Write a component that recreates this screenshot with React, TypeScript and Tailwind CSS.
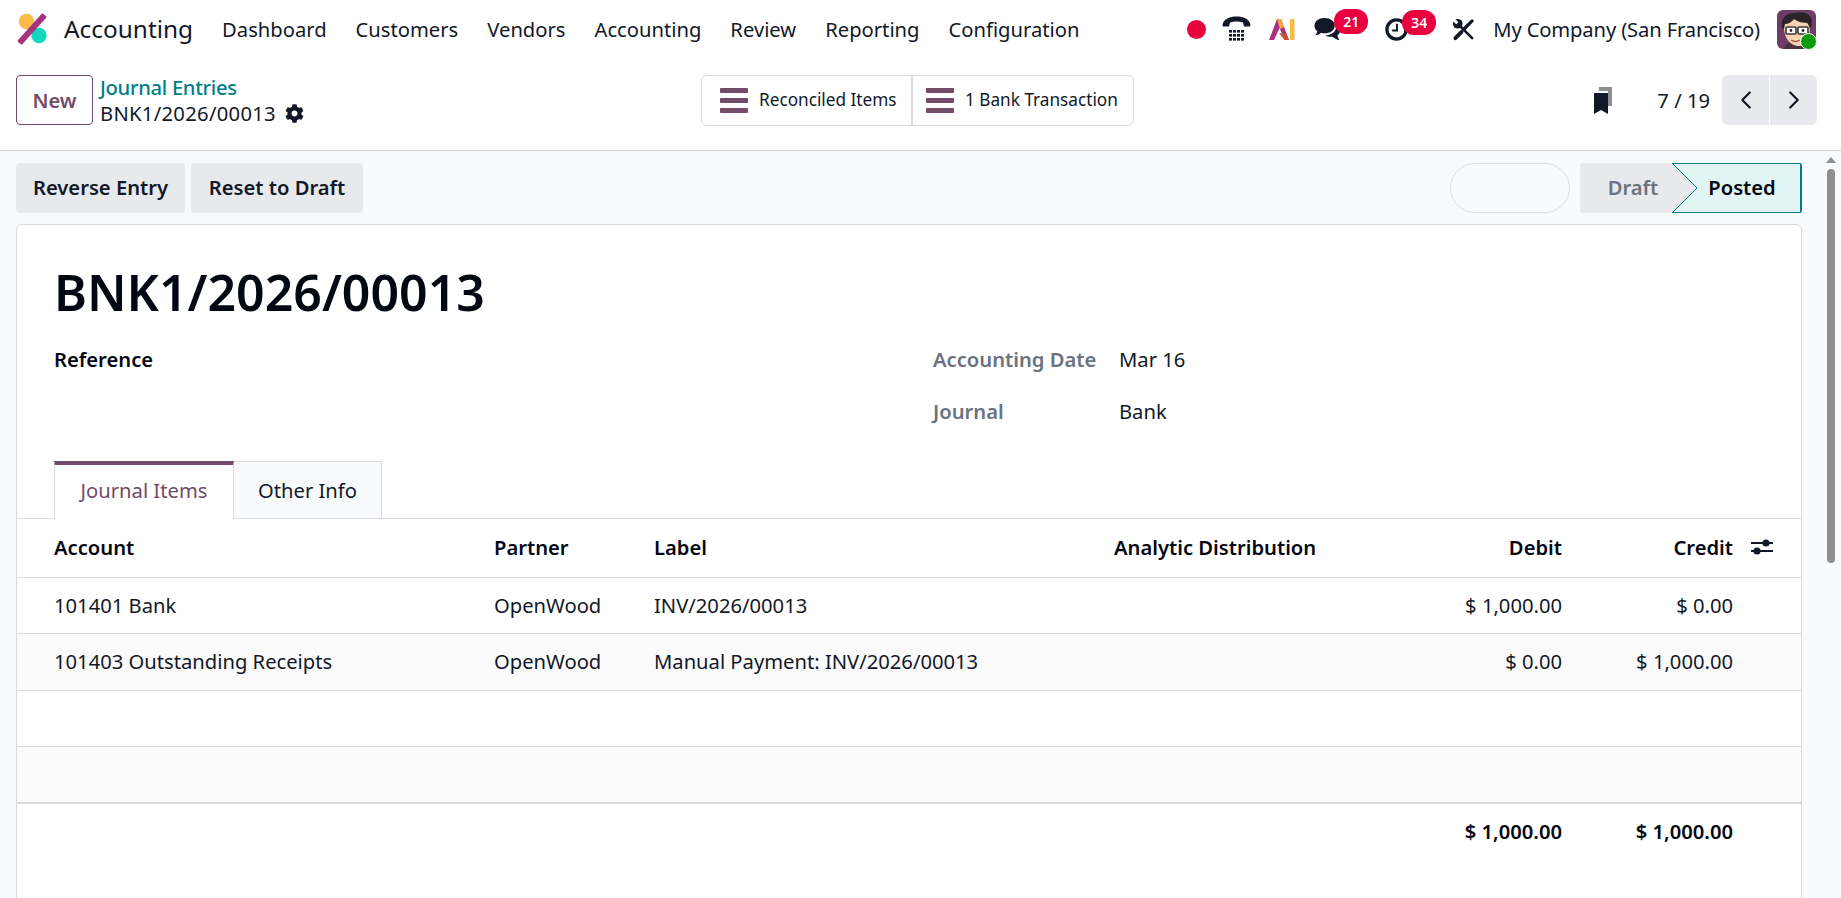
import { FaCog } from "react-icons/fa";
import { ChevronLeft, ChevronRight } from "lucide-react";

const menuItems = ["Dashboard", "Customers", "Vendors", "Accounting", "Review", "Reporting", "Configuration"];

const rows = [
  { account: "101401 Bank", partner: "OpenWood", label: "INV/2026/00013", debit: "$ 1,000.00", credit: "$ 0.00" },
  { account: "101403 Outstanding Receipts", partner: "OpenWood", label: "Manual Payment: INV/2026/00013", debit: "$ 0.00", credit: "$ 1,000.00" },
];

const gridCols = "grid grid-cols-[440px_160px_460px_300px_148px_171px_1fr] pl-[37px] items-center";

const Logo = () => (
  <svg viewBox="0 0 32 32" className="w-[32px] h-[32px]">
    <circle cx="10.5" cy="8.5" r="7.7" fill="#fbb945" />
    <circle cx="23" cy="22.5" r="7.7" fill="#0ed8bd" />
    <rect x="-3" y="13" width="38" height="6" rx="1.5" fill="#a8327f" transform="rotate(-48 16 16)" />
  </svg>
);

const PhoneIcon = () => (
  <svg viewBox="0 0 29 26" className="w-[29px] h-[26px]" fill="#111827">
    <path d="M0.5 9 C1 3 8 0.5 14.5 0.5 C21 0.5 28 3 28.5 9 L28 10.5 L22 10.5 L21 6.5 C17 5 12 5 8 6.5 L7 10.5 L1 10.5 Z" />
    {[14, 18, 22].map((y) =>
      [7, 11, 15, 19].map((x) => <rect key={`${x}-${y}`} x={x} y={y} width="3" height="2.6" />)
    )}
  </svg>
);

const AiIcon = () => (
  <svg viewBox="0 0 26 21" className="w-[26px] h-[21px]">
    <path d="M0 21 L8 0 L12 0 L20 21 L15.5 21 L10.5 9 L5 21 Z" fill="#a8327f" />
    <path d="M8 0 L12 0 L15 8 L11 10 Z" fill="#f2a93b" />
    <path d="M10 14 L17 15 L20 21 L15.5 21 Z" fill="#c2512f" />
    <rect x="21" y="0" width="4.5" height="21" rx="1" fill="#fbb945" />
  </svg>
);

const ChatIcon = () => (
  <svg viewBox="0 0 28 24" className="w-[27px] h-[24px]" fill="#111827">
    <path d="M11 0.5 C17 0.5 21.5 4 21.5 8.5 C21.5 13 17 16.5 11 16.5 C9.5 16.5 8.5 16.4 7.5 16 C6 17.5 3.5 18.5 1 18.5 C2.5 17.3 3.3 15.8 3.4 14.2 C1.5 12.8 0.5 10.8 0.5 8.5 C0.5 4 5 0.5 11 0.5 Z" />
    <path d="M23 8 C26 9.5 27.5 11.8 27 14.5 C26.7 16.3 25.5 17.6 24.3 18.6 C24.5 20.3 25.2 22 26.5 23.5 C23.5 23 21 21.7 19.5 20 C16.5 20.3 13.5 19.8 11.5 18.5 C17.5 18.5 24 14.5 23 8 Z" />
  </svg>
);

const ClockIcon = () => (
  <svg viewBox="0 0 24 24" className="w-[23px] h-[23px]" fill="none" stroke="#111827">
    <circle cx="12" cy="12" r="10" strokeWidth="3.4" />
    <path d="M12.5 6 V13 H7.5" strokeWidth="2" />
  </svg>
);

const ToolsIcon = () => (
  <svg viewBox="0 0 24 24" className="w-[23px] h-[23px]" fill="none" stroke="#111827" strokeLinecap="round">
    <circle cx="6" cy="6" r="5" fill="#111827" stroke="none" />
    <path d="M1.5 1.5 L5.5 5.5" stroke="#ffffff" strokeWidth="3.2" strokeLinecap="butt" />
    <path d="M8 8 L21 21" strokeWidth="2.8" />
    <path d="M21 3 L12.5 11.5" strokeWidth="3.4" />
    <path d="M10 14.5 L3.5 21" strokeWidth="4" />
  </svg>
);

const Bars = () => (
  <div className="flex flex-col gap-[5px] w-[28px] shrink-0">
    <div className="h-[5px] bg-[#714b67] rounded-[1px]" />
    <div className="h-[5px] bg-[#714b67] rounded-[1px]" />
    <div className="h-[5px] bg-[#714b67] rounded-[1px]" />
  </div>
);

const Bookmarks = () => (
  <svg viewBox="0 0 20 28" className="w-[20px] h-[28px]">
    <path d="M6 1 H19 V20 H15 V5 H6 Z" fill="#8f8f8f" />
    <path d="M1 7 H15 V28 L8 24 L1 28 Z" fill="#111827" />
  </svg>
);

const Sliders = () => (
  <svg viewBox="0 0 22 18" className="w-[22px] h-[18px]" fill="#111827">
    <rect x="0" y="4" width="22" height="2" />
    <rect x="0" y="12" width="22" height="2" />
    <circle cx="15" cy="5" r="3.6" />
    <circle cx="6" cy="13" r="3.6" />
  </svg>
);

const Avatar = () => (
  <div className="relative w-[39px] h-[39px] shrink-0">
    <svg viewBox="0 0 39 39" className="w-[39px] h-[39px] rounded-[6px]">
      <rect width="39" height="39" fill="#6f3c66" />
      <path d="M7 39 C8 33 14 31 20 31 C27 31 33 33 34 39 Z" fill="#4a3140" />
      <path d="M7 14 C6 26 12 36 22 36 C30 36 33 28 33 17 L28 10 L12 9 Z" fill="#f4d3ae" />
      <path d="M5 18 C3 8 10 2 19 3 C25 1 35 3 35 12 C35 15 34 17 33 19 L31 13 C26 13 21 12 17 9 C15 12 11 14 8 14 L7 19 Z" fill="#2a2329" />
      <rect x="9" y="17" width="10" height="7" rx="1" fill="#fff" stroke="#3a3438" strokeWidth="1.6" />
      <rect x="21" y="17" width="10" height="7" rx="1" fill="#fff" stroke="#3a3438" strokeWidth="1.6" />
      <circle cx="14" cy="20.5" r="1.4" fill="#2a2329" />
      <circle cx="26" cy="20.5" r="1.4" fill="#2a2329" />
      <path d="M14 30 C17 32 20 32 23 30" stroke="#a3524d" strokeWidth="1.4" fill="none" />
    </svg>
    <div className="absolute right-[-1px] bottom-[-1px] w-[17px] h-[17px] rounded-full bg-[#0a9a0a] border border-white" />
  </div>
);

const Badge = ({ value, className }: { value: number; className: string }) => (
  <span className={`absolute top-[-8px] h-[25px] w-[34px] rounded-[12px] bg-[#e9003f] text-white text-[14px] font-semibold flex items-center justify-center ${className}`}>
    {value}
  </span>
);

export default function App() {
  return (
    <div className="h-[898px] overflow-hidden flex flex-col bg-white text-[#111827] text-[20.2px] font-['Noto_Sans',sans-serif]">
      {/* top navbar */}
      <header className="h-[58px] shrink-0 flex items-center pl-[16px] pr-[25px]">
        <Logo />
        <span className="ml-[16px] text-[24.4px]">Accounting</span>
        <nav className="ml-[29px] flex gap-[29px]">
          {menuItems.map((item) => (
            <span key={item}>{item}</span>
          ))}
        </nav>
        <div className="ml-auto flex items-center">
          <span className="w-[19px] h-[19px] rounded-full bg-[#e9003f]" />
          <span className="ml-[16px]"><PhoneIcon /></span>
          <span className="ml-[18px]"><AiIcon /></span>
          <span className="relative ml-[19px]">
            <ChatIcon />
            <Badge value={21} className="left-[20px]" />
          </span>
          <span className="relative ml-[44px]">
            <ClockIcon />
            <Badge value={34} className="left-[17px]" />
          </span>
          <span className="ml-[44px]"><ToolsIcon /></span>
          <span className="ml-[18px] whitespace-nowrap tracking-[-0.14px]">My Company (San Francisco)</span>
          <span className="ml-[17px]"><Avatar /></span>
        </div>
      </header>

      {/* control panel */}
      <div className="h-[93px] shrink-0 flex items-center justify-between pl-[16px] pr-[24px] pb-[8px] border-b border-[#d8dadd] relative">
        <div className="flex items-center gap-[7px] w-[685px]">
          <button className="h-[50px] w-[77px] rounded-[4px] border border-[#714b67] text-[#714b67] font-semibold">New</button>
          <div className="leading-[26px]">
            <div className="text-[#017e84] font-medium tracking-[-0.3px]">Journal Entries</div>
            <div className="flex items-center gap-[9px] tracking-[0.3px]">
              BNK1/2026/00013 <FaCog className="w-[19px] h-[19px]" />
            </div>
          </div>
        </div>
        <div className="flex h-[51px] rounded-[6px] border border-[#d8dadd] text-[17.2px]">
          <div className="flex items-center gap-[11px] w-[211px] px-[18px] border-r-2 border-[#d8dadd]">
            <Bars />
            <span className="whitespace-nowrap">Reconciled Items</span>
          </div>
          <div className="flex items-center gap-[11px] w-[220px] pl-[13px] ">
            <Bars />
            <span className="whitespace-nowrap">1 Bank Transaction</span>
          </div>
        </div>
        <div className="flex items-center ml-auto">
          <Bookmarks />
          <span className="ml-[44px] mr-[12px]">7 / 19</span>
          <div className="flex h-[50px] gap-[1px] rounded-[6px] overflow-hidden">
            <div className="w-[47px] bg-[#e7e9ed] flex items-center justify-center"><ChevronLeft className="w-[30px] h-[30px]" strokeWidth={1.7} /></div>
            <div className="w-[47px] bg-[#e7e9ed] flex items-center justify-center"><ChevronRight className="w-[30px] h-[30px]" strokeWidth={1.7} /></div>
          </div>
        </div>
      </div>

      {/* content */}
      <div className="flex-1 flex min-h-0 bg-[#f9fafb]">
        <main className="flex-1 min-w-0 pl-[16px] pr-[19px]">
          <div className="flex items-center h-[73px] gap-[6px]">
            <button className="h-[50px] w-[169px] rounded-[4px] bg-[#e7e9ed] font-semibold whitespace-nowrap">Reverse Entry</button>
            <button className="h-[50px] w-[172px] rounded-[4px] bg-[#e7e9ed] font-semibold whitespace-nowrap">Reset to Draft</button>
            <div className="ml-auto w-[120px] h-[50px] rounded-full border border-[#d8dadd]" />
            <div className="ml-[4px] relative flex h-[50px] w-[222px] rounded-[3px] overflow-hidden bg-[#e7e9ed] font-semibold">
              <div className="w-[92px] pl-[14px] flex items-center justify-center text-[#6b7280]">Draft</div>
              <div className="flex-1 flex items-center justify-center pl-[12px] text-[#030712] bg-[#e2f3f3] border-y border-r-2 border-[#017e84]">Posted</div>
              <svg viewBox="0 0 25 50" className="absolute left-[92px] top-0 w-[25px] h-[50px]">
                <path d="M0 0 L25 25 L0 50 Z" fill="#e7e9ed" />
                <path d="M0 0 L25 25 L0 50" fill="none" stroke="#017e84" strokeWidth="1" />
              </svg>
            </div>
          </div>

          <section className="h-[700px] bg-white border border-[#d8dadd] rounded-t-[6px]">
            <div className="pl-[37px] pt-[32px]">
              <h1 className="text-[50px] leading-[70px] font-semibold text-[#030712]">BNK1/2026/00013</h1>
              <div className="flex mt-[19px]">
                <div className="w-[879px] font-semibold leading-[26px] text-[#030712]">Reference</div>
                <div className="grid grid-cols-[186px_1fr] gap-y-[26px] leading-[26px]">
                  <span className="text-[#6b7280] font-semibold whitespace-nowrap">Accounting Date</span>
                  <span>Mar 16</span>
                  <span className="text-[#6b7280] font-semibold">Journal</span>
                  <span>Bank</span>
                </div>
              </div>
            </div>

            <div className="flex mt-[37px] pl-[37px] h-[58px] border-b border-[#d8dadd]">
              <div className="w-[180px] h-[58px] pb-[4px] bg-white border-x border-[#d8dadd] border-t-[4px] border-t-[#714b67] text-[#714b67] flex items-center justify-center">Journal Items</div>
              <div className="w-[148px] h-[57px] bg-[#f9fafb] border-t border-r border-[#d8dadd] flex items-center justify-center">Other Info</div>
            </div>

            <div className={`${gridCols} h-[58.5px] pb-[1px] border-b border-[#d8dadd] font-semibold text-[#030712]`}>
              <span>Account</span>
              <span>Partner</span>
              <span>Label</span>
              <span className="whitespace-nowrap">Analytic Distribution</span>
              <span className="text-right">Debit</span>
              <span className="text-right">Credit</span>
              <span className="pl-[18px]"><Sliders /></span>
            </div>
            {rows.map((row, i) => (
              <div key={row.account} className={`${gridCols} h-[56.5px] pb-[1px] border-b border-[#d8dadd] ${i === 1 ? "bg-[#fbfbfb]" : ""}`}>
                <span>{row.account}</span>
                <span>{row.partner}</span>
                <span>{row.label}</span>
                <span />
                <span className="text-right">{row.debit}</span>
                <span className="text-right">{row.credit}</span>
              </div>
            ))}
            <div className="h-[56px] border-b border-[#d8dadd]" />
            <div className="h-[57px] border-b-2 border-[#d8dadd] bg-[#fbfbfb]" />
            <div className={`${gridCols} h-[56px] font-semibold text-[#030712]`}>
              <span />
              <span />
              <span />
              <span />
              <span className="text-right">$ 1,000.00</span>
              <span className="text-right">$ 1,000.00</span>
            </div>
          </section>
        </main>

        {/* scrollbar */}
        <div className="w-[20px] shrink-0 flex flex-col items-center pt-[6px]">
          <div className="w-0 h-0 border-x-[5px] border-x-transparent border-b-[6px] border-b-[#8f8f8f]" />
          <div className="mt-[6px] w-[8px] h-[394px] rounded-[4px] bg-[#8f8f8f]" />
        </div>
      </div>
    </div>
  );
}
